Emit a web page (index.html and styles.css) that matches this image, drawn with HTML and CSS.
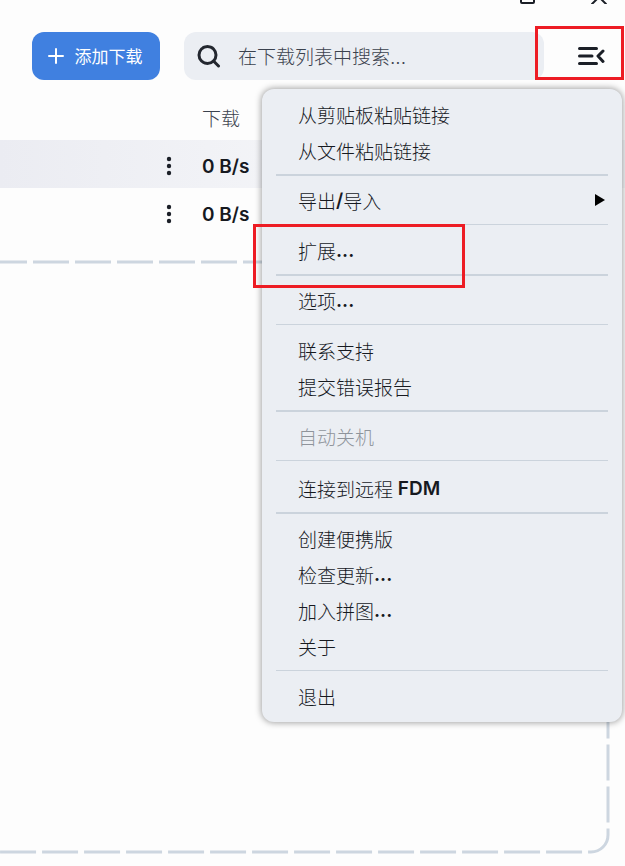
FILE: index.html
```html
<!DOCTYPE html>
<html lang="zh-CN">
<head>
  <meta charset="UTF-8">
  <meta name="viewport" content="width=device-width, initial-scale=1">
  <title>FDM</title>
  <link rel="stylesheet" href="styles.css">
</head>
<body>
  <!-- Window buttons -->
  <div class="titlebar">
    <button class="win-btn" aria-label="最大化">
      <svg width="16" height="4" viewBox="0 0 16 4"><path d="M1 -10V2Q1 3 2 3H13Q14 3 14 2V-10"/></svg>
    </button>
    <button class="win-btn" aria-label="关闭">
      <svg width="16" height="4" viewBox="0 0 16 4"><path d="M1 4L15 -10M15 4L1 -10"/></svg>
    </button>
  </div>

  <!-- Toolbar -->
  <header class="toolbar">
    <button class="add-btn">
      <svg width="16" height="16" viewBox="0 0 16 16"><path d="M8 1V15M1 8H15"/></svg>
      添加下载
    </button>
    <label class="search">
      <svg width="24" height="24" viewBox="0 0 24 24"><circle cx="10.500" cy="11" r="8.500"/><path d="M16.500 17L21.500 22"/></svg>
      <input type="text" placeholder="在下载列表中搜索..." aria-label="搜索">
    </label>
    <div class="menu-wrap">
      <button class="menu-btn" aria-label="菜单">
        <svg width="28" height="20" viewBox="0 0 28 20"><path d="M2.500 2.500H19.500M2.500 10H15M2.500 17.500H19.500M26 5L21 10L26 15.500"/></svg>
      </button>
      <nav class="menu">
        <button>从剪贴板粘贴链接</button>
        <button>从文件粘贴链接</button>
        <hr>
        <button>导出<b>/</b>导入
          <svg width="10" height="12" viewBox="0 0 10 12"><path d="M0 0L10 6L0 12Z"/></svg>
        </button>
        <hr>
        <button>扩展<b>...</b></button>
        <hr>
        <button>选项<b>...</b></button>
        <hr>
        <button>联系支持</button>
        <button>提交错误报告</button>
        <hr>
        <button disabled>自动关机</button>
        <hr>
        <button class="remote">连接到远程<b>&nbsp;FDM</b></button>
        <hr>
        <button>创建便携版</button>
        <button>检查更新<b>...</b></button>
        <button>加入拼图<b>...</b></button>
        <button>关于</button>
        <hr>
        <button>退出</button>
        <span class="mark mark-item"></span>
      </nav>
      <span class="mark mark-menu"></span>
    </div>
  </header>

  <!-- Download list -->
  <table class="downloads">
    <thead>
      <tr><th></th><th class="col-more"></th><th class="col-speed">下载</th></tr>
    </thead>
    <tbody>
      <tr class="selected">
        <td></td>
        <td><button class="more-btn" aria-label="更多"><svg width="6" height="20" viewBox="0 0 6 20"><circle cx="3" cy="3" r="2.200"/><circle cx="3" cy="10" r="2.200"/><circle cx="3" cy="17" r="2.200"/></svg></button></td>
        <td>0 B/s</td>
      </tr>
      <tr>
        <td></td>
        <td><button class="more-btn" aria-label="更多"><svg width="6" height="20" viewBox="0 0 6 20"><circle cx="3" cy="3" r="2.200"/><circle cx="3" cy="10" r="2.200"/><circle cx="3" cy="17" r="2.200"/></svg></button></td>
        <td>0 B/s</td>
      </tr>
    </tbody>
  </table>

  <!-- Drop area with dashed outline -->
  <main class="drop-area">
    <svg><rect x="-26" y="2" rx="17"/></svg>
  </main>
</body>
</html>
```
FILE: styles.css
```css
* {
  box-sizing: border-box;
}

body {
  margin: 0;
  min-height: 100vh;
  display: flex;
  flex-direction: column;
  overflow-x: hidden;
  background: #fdfdfd;
  color: #16191f;
  font-family: Inter, "Noto Sans CJK SC", sans-serif;
  font-size: 19px;
  font-weight: 300;
}

b {
  font-weight: 600;
}

button {
  padding: 0;
  border: none;
  background: none;
  color: inherit;
  font: inherit;
  cursor: pointer;
}

svg {
  display: block;
  flex: none;
  fill: none;
  stroke: #1b1f27;
  stroke-linecap: round;
}

/* Window buttons */
.titlebar {
  height: 32px;
  padding-right: 18px;
  display: flex;
  justify-content: flex-end;
  align-items: flex-start;
  gap: 55px;
}

.win-btn svg {
  stroke-width: 2;
}

/* Toolbar */
.toolbar {
  display: flex;
  align-items: center;
  padding-left: 32px;
}

.add-btn {
  width: 128px;
  height: 48px;
  margin-right: 24px;
  padding: 0 2px 1px 0;
  display: flex;
  align-items: center;
  justify-content: center;
  gap: 11px;
  border-radius: 12px;
  background: #4080e0;
  color: #fff;
  font-size: 17px;
  font-weight: 400;
}

.add-btn svg {
  stroke: #fff;
  stroke-width: 2;
}

.search {
  flex: 1;
  min-width: 0;
  height: 48px;
  padding-left: 13px;
  display: flex;
  align-items: center;
  gap: 17px;
  border-radius: 12px;
  background: #ebeef3;
}

.search svg {
  stroke: #23272f;
  stroke-width: 3;
}

.search input {
  flex: 1;
  min-width: 0;
  padding: 2px 0 0;
  border: none;
  outline: none;
  background: none;
  font: inherit;
}

.search input::placeholder {
  color: #3b424e;
}

.menu-wrap {
  position: relative;
  width: 81px;
  padding-left: 33px;
}

.menu-btn {
  display: block;
}

.menu-btn svg {
  stroke-width: 3;
  stroke-linejoin: round;
}

/* Dropdown menu */
.menu {
  position: absolute;
  top: 43px;
  right: 3px;
  width: 360px;
  padding: 8px 0 7px;
  border-radius: 12px;
  background: #ebeef3;
  box-shadow: 0 0 6px 1px rgba(0, 0, 0, 0.35);
}

.menu button {
  width: 100%;
  height: 36px;
  padding: 0 17px 2px 36px;
  display: flex;
  align-items: center;
  text-align: left;
}

.menu button:disabled {
  color: #8f949b;
}

.menu .remote {
  height: 38px;
  padding-bottom: 0;
}

.menu svg {
  margin-left: auto;
  fill: #000;
  stroke: none;
}

.menu hr {
  height: 1px;
  margin: 5px 14px 8px;
  border: none;
  background: #cbd3dc;
}

.menu hr:nth-of-type(odd) {
  height: 2px;
  margin-bottom: 7px;
}

/* Red marks */
.mark {
  position: absolute;
  border: 3px solid #ed1c24;
  pointer-events: none;
}

.mark-menu {
  top: -20px;
  right: 1px;
  width: 89px;
  height: 54px;
}

.mark-item {
  top: 135px;
  left: -9px;
  width: 212px;
  height: 64px;
}

/* Download list */
.downloads {
  width: 100%;
  border-collapse: collapse;
  table-layout: fixed;
}

.downloads th,
.downloads td {
  height: 48px;
  padding: 4px 0 0;
  text-align: left;
}

.downloads td {
  font-weight: 600;
}

.downloads th {
  height: 60px;
  padding-top: 14px;
  color: #3b424e;
  font-weight: 300;
}

.col-more {
  width: 36px;
}

.col-speed {
  width: 423px;
}

.selected {
  background: linear-gradient(to right, #ebecf2, #f4f5f8 50%);
}

.more-btn {
  display: block;
}

.more-btn svg {
  fill: #1b1f27;
  stroke: none;
}

/* Drop area */
.drop-area {
  flex: 1;
  display: flex;
  margin: 24px 15px 12px 0;
}

.drop-area svg {
  width: 100%;
  stroke: #cdd6e0;
  stroke-width: 3;
  stroke-linecap: butt;
}

.drop-area rect {
  width: calc(100% + 24px);
  height: calc(100% - 4px);
  stroke-dasharray: 36 6;
}
```
